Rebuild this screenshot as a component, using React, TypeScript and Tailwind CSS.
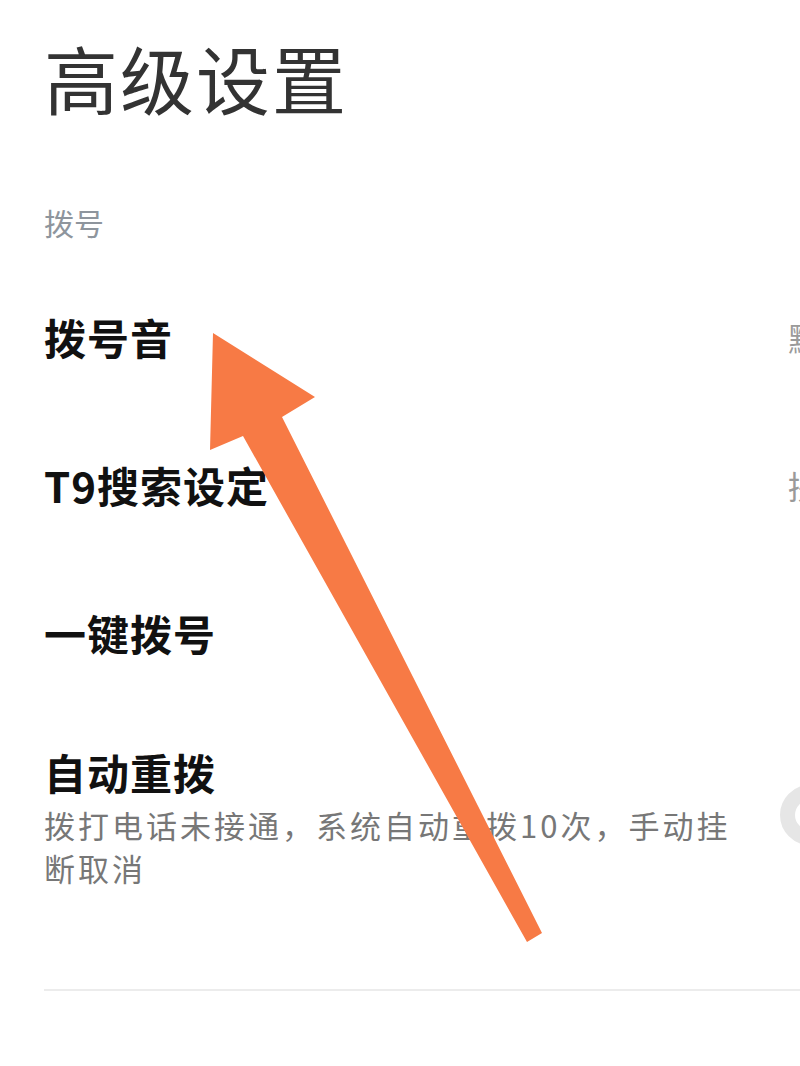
import React from "react";

const font = { fontFamily: '"Noto Sans CJK SC", "Noto Sans", sans-serif' };

function Row({ title, value }: { title: string; value?: string }) {
  return (
    <div className="flex h-[148px] items-center whitespace-nowrap">
      <div className="w-[744px] shrink-0 text-[42px] font-bold leading-none tracking-[1px] text-[#111]">{title}</div>
      {value ? <div className="text-[32px] leading-none text-[#9a9a9a]">{value}</div> : null}
    </div>
  );
}

export default function App() {
  return (
    <div className="relative h-[1066px] w-[800px] overflow-hidden bg-white" style={font}>
      <div className="pl-[44px]">
        <div className="flex h-[154px] items-center">
          <div className="text-[74px] font-normal leading-none tracking-[2px] text-[#333]">高级设置</div>
        </div>
        <div className="flex h-[109px] items-center pt-[27px]">
          <div className="text-[30px] leading-none text-[#8e959d]">拨号</div>
        </div>
        <Row title="拨号音" value="默认" />
        <Row title="T9搜索设定" value="拼音" />
        <Row title="一键拨号" />
        <div className="flex pt-[40px]">
          <div className="w-[700px] shrink-0">
            <div className="h-[50px] text-[42px] font-bold leading-[50px] tracking-[1px] text-[#111]">自动重拨</div>
            <div className="mt-[6px] text-[31px] leading-[43px] tracking-[3px] text-[#777]">
              <div className="whitespace-nowrap">拨打电话未接通，系统自动重拨10次，手动挂</div>
              <div className="whitespace-nowrap">断取消</div>
            </div>
          </div>
          <div className="ml-[36px] mt-[38px] h-[60px] w-[60px] shrink-0 rounded-full border-[15px] border-[#e6e6e6] bg-white" />
        </div>
        <div className="mt-[100px] h-[2px] bg-[#ececec]" />
      </div>
      <svg
        className="pointer-events-none absolute left-0 top-0"
        width="800"
        height="1066"
        viewBox="0 0 800 1066"
      >
        <polygon
          points="213,333 315,397 282,417 542,933 527,942 243,436 210,450"
          fill="#f77a45"
        />
      </svg>
    </div>
  );
}
